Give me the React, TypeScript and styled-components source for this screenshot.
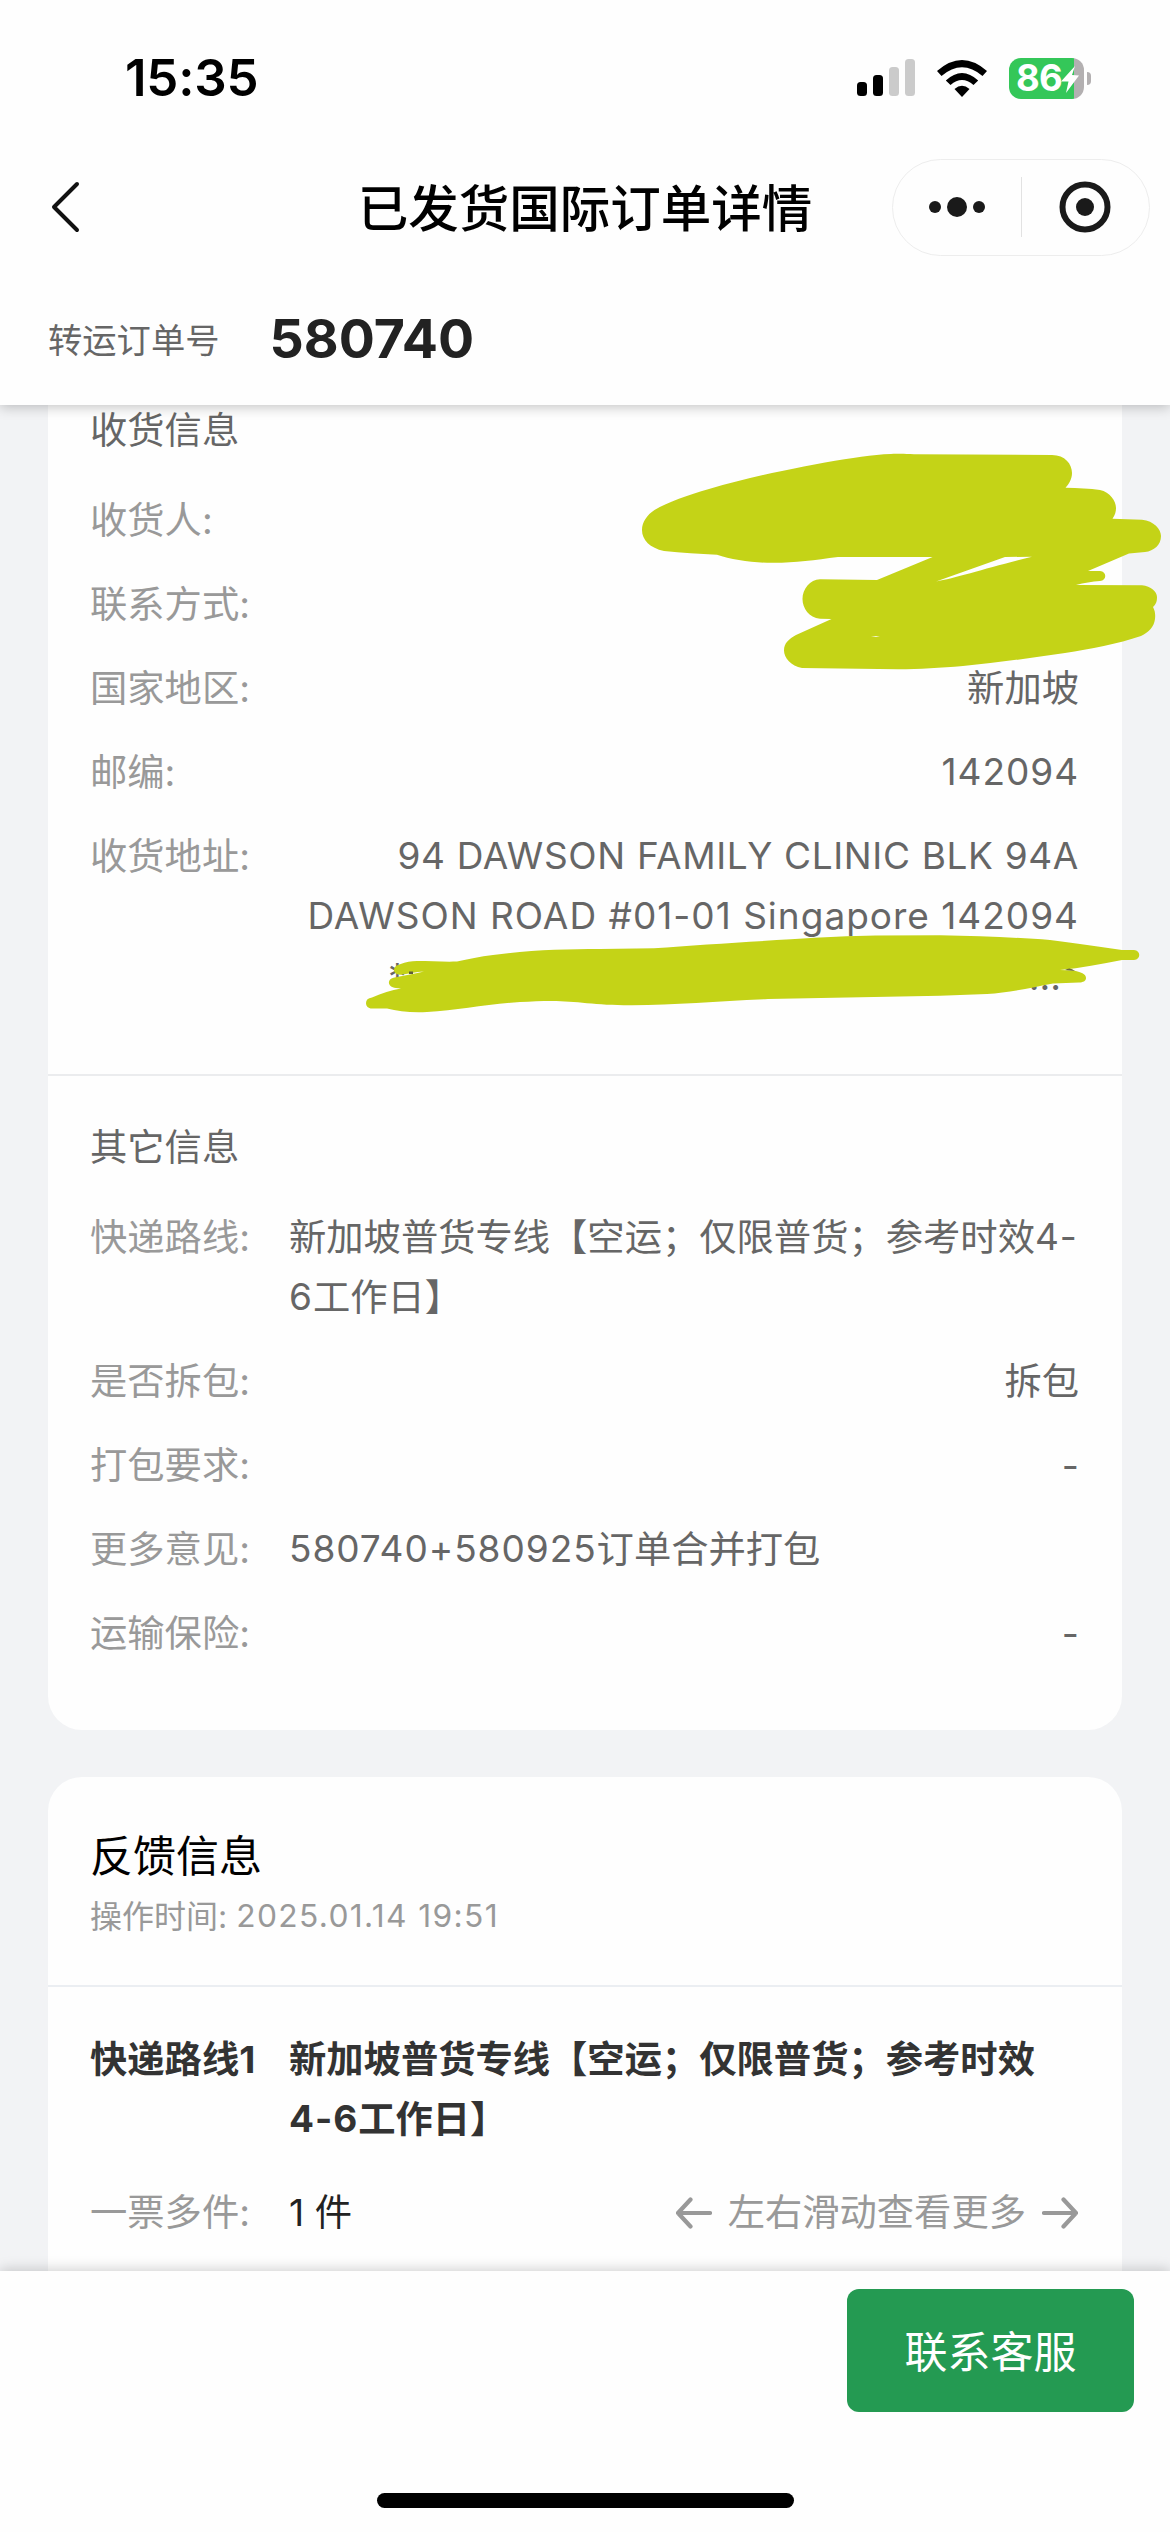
import React from 'react';
import styled, { createGlobalStyle } from 'styled-components';

const Global = createGlobalStyle`
  * { box-sizing: border-box; }
  html, body { margin: 0; padding: 0; background: #f2f3f5; }
  body { width: 1170px; height: 2532px; overflow: hidden; }
  #root { height: 100%; }
`;

const Screen = styled.div`
  position: relative;
  display: flex;
  flex-direction: column;
  width: 1170px;
  height: 2532px;
  overflow: hidden;
  background: #f2f3f5;
  color: #666;
  font-family: Inter, 'Noto Sans CJK SC', sans-serif;
  font-size: 37.3px;
  line-height: 60px;
`;

const Header = styled.header`
  position: relative;
  z-index: 2;
  flex: none;
  height: 405px;
  background: #fefefe;
  box-shadow: 0 2px 12px rgba(0, 0, 0, 0.24);
`;

const StatusBar = styled.div`
  display: flex;
  align-items: center;
  justify-content: space-between;
  height: 156px;
  padding: 0 79px 0 125px;
`;

const Clock = styled.div`
  color: #000;
  font-size: 51px;
  font-weight: 600;
  letter-spacing: -0.2px;
`;

const StatusIcons = styled.div`
  display: flex;
  align-items: center;
  gap: 22px;
`;

const Battery = styled.div`
  position: relative;
  display: flex;
  align-items: center;
  width: 75px;
  height: 41px;
  padding-left: 7px;
  border-radius: 12px;
  background: linear-gradient(90deg, #34c759 0 65px, #b3b0b1 65px);
  color: #fff;
  font-size: 36.5px;
  font-weight: 700;
  line-height: 41px;
  letter-spacing: -0.8px;
  margin-right: 7px;
`;

const BatteryBolt = styled.svg`
  position: absolute;
  left: 51.5px;
  top: 8px;
`;

const BatteryCap = styled.span`
  position: absolute;
  right: -7px;
  top: 14px;
  width: 4px;
  height: 13px;
  border-radius: 0 6px 6px 0;
  background: #b3b0b1;
`;

const NavBar = styled.nav`
  display: grid;
  grid-template-columns: 278px 1fr 278px;
  align-items: center;
  height: 102px;
  padding: 0 20px;
`;

const BackIcon = styled.svg`
  margin-left: 28px;
`;

const NavTitle = styled.h1`
  margin: 0;
  padding-top: 4px;
  color: #000;
  font-size: 50.5px;
  font-weight: 500;
  line-height: 70px;
  text-align: center;
  white-space: nowrap;
`;

const Capsule = styled.div`
  display: grid;
  grid-template-columns: 1fr 1px 1fr;
  align-items: center;
  justify-items: center;
  justify-self: end;
  width: 258px;
  height: 97px;
  border: 1.5px solid #ededed;
  border-radius: 49px;
`;

const CapsuleRule = styled.span`
  width: 1px;
  height: 60px;
  background: #e2e2e2;
`;

const OrderBar = styled.div`
  display: flex;
  align-items: center;
  gap: 50px;
  height: 147px;
  padding: 14px 48px 0;
`;

const OrderLabel = styled.span`
  padding-top: 5px;
  font-size: 34.3px;
`;

const OrderNumber = styled.strong`
  color: #222;
  font-size: 53.6px;
  font-weight: 700;
`;

const Content = styled.main`
  flex: 1;
  display: flex;
  flex-direction: column;
  gap: 47px;
  min-height: 0;
  padding: 0 48px;
  overflow: hidden;
`;

const Card = styled.section<{ $continued?: boolean }>`
  flex: none;
  margin-top: ${p => (p.$continued ? '-5px' : '0')};
  border-radius: ${p => (p.$continued ? '0 0 34px 34px' : '34px')};
  background: #fefefe;
`;

const Group = styled.div<{ $top: number; $bottom: number }>`
  display: flex;
  flex-direction: column;
  gap: 24px;
  padding: ${p => p.$top}px 43px ${p => p.$bottom}px 42px;
  & + & { border-top: 2px solid #ebecee; }
`;

const GroupTitle = styled.h2`
  margin: 0 0 6px;
  font-size: inherit;
  font-weight: 400;
`;

const Row = styled.div`
  display: flex;
  align-items: flex-start;
`;

const Label = styled.span<{ $strong?: boolean }>`
  flex: none;
  width: 199px;
  color: ${p => (p.$strong ? '#333' : '#999')};
  font-weight: ${p => (p.$strong ? 700 : 400)};
  white-space: nowrap;
`;

const Value = styled.span<{ $align?: 'left' | 'right'; $strong?: boolean }>`
  flex: 1;
  min-width: 0;
  color: ${p => (p.$strong ? '#333' : '#666')};
  font-weight: ${p => (p.$strong ? 700 : 400)};
  text-align: ${p => p.$align ?? 'right'};
  white-space: nowrap;
`;

const Latin = styled.span<{ $track?: number }>`
  font-size: 0.992em;
  line-height: 1;
  letter-spacing: ${p => p.$track ?? 0.95}px;
  vertical-align: 1px;
`;

const MaskedLine = styled.span`
  display: flex;
  justify-content: space-between;
  padding: 0 18px 0 99px;
`;

const FeedbackHead = styled.div`
  height: 210px;
  padding: 49px 43px 0 42px;
  border-bottom: 2px solid #ebeef2;
`;

const FeedbackTitle = styled.h2`
  margin: 0;
  color: #000;
  font-size: 43px;
  font-weight: 400;
`;

const FeedbackTime = styled.p`
  margin: 1px 0 0;
  color: #999;
  font-size: 32px;
`;

const FeedbackBody = styled.div`
  display: flex;
  flex-direction: column;
  gap: 33px;
  padding: 43px 43px 70px 42px;
`;

const Count = styled.span`
  flex: 1;
  color: #222;
`;

const SwipeHint = styled.span`
  display: flex;
  align-items: center;
  gap: 16px;
  padding-right: 1px;
  color: #999;
`;

const Footer = styled.footer`
  position: relative;
  z-index: 2;
  flex: none;
  display: flex;
  flex-direction: column;
  justify-content: space-between;
  height: 261px;
  padding: 18px 36px 24px;
  background: #fefefe;
  box-shadow: 0 -2px 12px rgba(0, 0, 0, 0.18);
`;

const ServiceButton = styled.button`
  align-self: flex-end;
  width: 287px;
  height: 123px;
  padding: 2px 0 0;
  border: 0;
  border-radius: 12px;
  background: #249a52;
  color: #fff;
  font: 400 43px/60px Inter, 'Noto Sans CJK SC', sans-serif;
`;

const HomeIndicator = styled.div`
  align-self: center;
  width: 417px;
  height: 15px;
  border-radius: 8px;
  background: #000;
`;

const MarkerLayer = styled.svg`
  position: absolute;
  left: 0;
  top: 0;
  z-index: 1;
  pointer-events: none;
`;

const Signal = () => (
  <svg width="58" height="38" viewBox="0 0 58 38">
    <rect x="0" y="23" width="10" height="14" rx="3.5" />
    <rect x="16" y="16" width="10" height="21" rx="3.5" />
    <rect x="32" y="8" width="10" height="29" rx="3.5" fill="#cbcbcb" />
    <rect x="48" y="0" width="10" height="37" rx="3.5" fill="#cbcbcb" />
  </svg>
);

const Wifi = () => (
  <svg width="50" height="37" viewBox="0 0 50 37">
    <path d="M0 11 Q25 -11 50 11 L45.5 16 Q25 -1.500 4.500 16 Z" />
    <path d="M8.800 20.500 Q25 5.500 41.200 20.500 L36.500 25 Q25 15 13.500 25 Z" />
    <path d="M17.500 29 Q25 22.500 32.500 29 L25 37 Z" />
  </svg>
);

const Arrow = ({ flip }: { flip?: boolean }) => (
  <svg width="36" height="34" viewBox="0 0 36 34" fill="none" stroke="#999" strokeWidth="4.200" strokeLinecap="round" strokeLinejoin="round">
    <path d={flip ? 'M2 17H34M21.500 3.500L34 17L21.500 30.500' : 'M34 17H2M14.500 3.500L2 17L14.500 30.500'} />
  </svg>
);

const Marker = () => (
  <MarkerLayer width="1170" height="2532" viewBox="0 0 1170 2532" fill="#c4d317">
    <path
      fillRule="evenodd"
      d="M642 530 C642 522 647 515 654.500 510 C668 502 688 495 709 489 C733 482 757 476 782 471 C797 468 811 465 825 462.500 C853 458 872 454.500 891 454 C903 453.600 906 454 914 454.300 L1052 455 C1065 455 1072 464 1072 473 C1072 479 1069 484 1065.500 487.700 C1078 488 1090 488.500 1100 490 C1110 492 1116 501 1116 508 C1116 512 1115 515 1112.500 518.700 L1142 519.700 C1154 521 1161 529 1161 536 C1161 545 1154 551 1145 552 L1129 553.500 L1088 571 L1100 571 C1107 571.500 1107 580.500 1100 581 C1092 581.500 1084 583 1076 585 L1142 585.300 C1151 586 1157 592 1157 597 C1157 602 1156 604 1153 607 C1155 611 1155.500 614 1155 619 C1154 627 1149 632 1141 636 C1118 644 1090 649 1065 653 C1030 658 996 663 963 666 C940 668 920 669 898 669.300 L802 668 C791 666 784 658 784 650.500 C784 643 789 639 796 635 L831.500 619 L820 618.700 C809 618 802.500 608 802.500 599 C802.500 589 810 579.500 820 579.300 L877 580 L932.600 557 L838 557 C815 560 795 562.700 774 562.800 C755 563 732 560 717 554.700 C699 554 682 553 664 551 C650 548 642 540 642 530 Z
      M936 581.500 C956 578 990 567 1032 556.700 L1005 557 Z
      M871 637 L876 636 L880 636.700 Z"
    />
    <path d="M366 1003 C366 1000 368 998 372 997.500 C382 993 391 990 401 988.500 L396 988 C387 987 387 979 393.500 977.700 C403 975.500 414 974 424 971.500 C415 972 408 974 400 974.700 C392 974 392 966 400 964.300 C406 962 411 961 417 961 C430 961 445 962 457 961.500 C468 959 480 956.500 493 955 C530 950 565 949 600 949 L654 948.300 C695 945 745 942 791 939.300 C824 937 850 936 876 935.500 L940 935.300 C980 936 1018 937.500 1050 940 C1076 943 1099 947 1122 950 L1134 950 C1141 950.500 1141 959.500 1134 960 L1122 960 C1101 964 1081 968 1060 970 L1073 970.500 C1081 972 1086 974 1086 978 C1086 981 1083 982.500 1079 982.500 L1053 983.500 C1030 988 1008 993 987 994 L940 995.700 L768 999 C720 1001 675 1005 632 1005.300 C597 1005.500 576 1001 552 1001 C541 1001 531 1001.500 520 1002 C488 1004 458 1010 427 1012 C411 1013 398 1011 387 1008.500 L372 1008.500 C368 1008.500 366 1006 366 1003 Z" />
    <path d="M1065 970 Q1070 966.500 1075 971 Z" fill="#6b6b3a" />
    <path d="M409 971.500h4v2.500h-4z" fill="#5c5c3c" />
  </MarkerLayer>
);

const recipient = [
  ['收货人:', ''],
  ['联系方式:', ''],
  ['国家地区:', '新加坡'],
];

export default function App() {
  return (
    <>
      <Global />
      <Screen>
        <Header>
          <StatusBar>
            <Clock>15:35</Clock>
            <StatusIcons>
              <Signal />
              <Wifi />
              <Battery>
                86
                <BatteryBolt width="18" height="27" viewBox="0 0 18 27" fill="#fff">
                  <path d="M14 0L0 15.500H7.500L5 27L18 9.500L11 9Z" />
                </BatteryBolt>
                <BatteryCap />
              </Battery>
            </StatusIcons>
          </StatusBar>
          <NavBar>
            <BackIcon width="32" height="52" viewBox="0 0 32 52" fill="none" stroke="#111" strokeWidth="4" strokeLinecap="round" strokeLinejoin="round">
              <path d="M29 3L6 26L29 49" />
            </BackIcon>
            <NavTitle>已发货国际订单详情</NavTitle>
            <Capsule>
              <svg width="56" height="20" viewBox="0 0 56 20" fill="#1a1a1a">
                <circle cx="6" cy="10" r="6" />
                <circle cx="28" cy="10" r="10" />
                <circle cx="50" cy="10" r="6" />
              </svg>
              <CapsuleRule />
              <svg width="52" height="52" viewBox="0 0 52 52">
                <circle cx="26" cy="26" r="22.500" fill="none" stroke="#1a1a1a" strokeWidth="6" />
                <circle cx="26" cy="26" r="9" fill="#1a1a1a" />
              </svg>
            </Capsule>
          </NavBar>
          <OrderBar>
            <OrderLabel>转运订单号</OrderLabel>
            <OrderNumber>580740</OrderNumber>
          </OrderBar>
        </Header>
        <Content>
          <Card $continued>
            <Group $top={1} $bottom={67}>
              <GroupTitle>收货信息</GroupTitle>
              {recipient.map(([label, value]) => (
                <Row key={label}>
                  <Label>{label}</Label>
                  <Value>{value}</Value>
                </Row>
              ))}
              <Row>
                <Label>邮编:</Label>
                <Value>
                  <Latin>142094</Latin>
                </Value>
              </Row>
              <Row>
                <Label>收货地址:</Label>
                <Value>
                  <Latin $track={0.65}>94 DAWSON FAMILY CLINIC BLK 94A</Latin>
                  <br />
                  <Latin $track={1}>DAWSON ROAD #01-01 Singapore 142094</Latin>
                  <MaskedLine>
                    <span>*</span>
                    <span>...</span>
                  </MaskedLine>
                </Value>
              </Row>
            </Group>
            <Group $top={42} $bottom={66}>
              <GroupTitle>其它信息</GroupTitle>
              <Row>
                <Label>快递路线:</Label>
                <Value $align="left">
                  新加坡普货专线【空运；仅限普货；参考时效<Latin>4-</Latin>
                  <br />
                  <Latin>6</Latin>工作日】
                </Value>
              </Row>
              <Row>
                <Label>是否拆包:</Label>
                <Value>拆包</Value>
              </Row>
              <Row>
                <Label>打包要求:</Label>
                <Value>-</Value>
              </Row>
              <Row>
                <Label>更多意见:</Label>
                <Value $align="left">
                  <Latin>580740+580925</Latin>订单合并打包
                </Value>
              </Row>
              <Row>
                <Label>运输保险:</Label>
                <Value>-</Value>
              </Row>
            </Group>
          </Card>
          <Card>
            <FeedbackHead>
              <FeedbackTitle>反馈信息</FeedbackTitle>
              <FeedbackTime>
                操作时间: <Latin $track={1.35}>2025.01.14 19:51</Latin>
              </FeedbackTime>
            </FeedbackHead>
            <FeedbackBody>
              <Row>
                <Label $strong>快递路线1</Label>
                <Value $align="left" $strong>
                  新加坡普货专线【空运；仅限普货；参考时效
                  <br />
                  <Latin>4-6</Latin>工作日】
                </Value>
              </Row>
              <Row>
                <Label>一票多件:</Label>
                <Count>1 件</Count>
                <SwipeHint>
                  <Arrow />
                  左右滑动查看更多
                  <Arrow flip />
                </SwipeHint>
              </Row>
            </FeedbackBody>
          </Card>
        </Content>
        <Marker />
        <Footer>
          <ServiceButton>联系客服</ServiceButton>
          <HomeIndicator />
        </Footer>
      </Screen>
    </>
  );
}
